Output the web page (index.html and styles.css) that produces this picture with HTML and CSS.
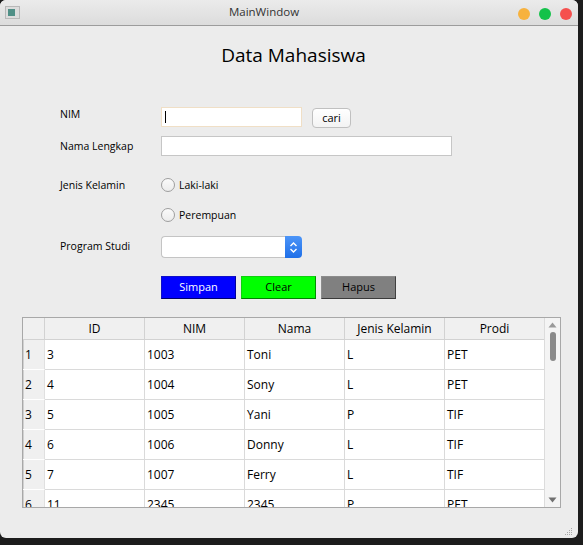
FILE: index.html
```html
<!DOCTYPE html>
<html>
<head>
<meta charset="utf-8">
<title>MainWindow</title>
<link rel="stylesheet" href="styles.css">
</head>
<body>
<div class="window">
  <div class="titlebar">
    <div class="app-icon"><span></span></div>
    <div class="title">MainWindow</div>
    <div class="lights">
      <span class="light orange"></span>
      <span class="light green"></span>
      <span class="light red"></span>
    </div>
  </div>
  <div class="content">
    <h1 class="heading">Data Mahasiswa</h1>
    <div class="form">
      <div class="row row-nim">
        <div class="label label-top">NIM</div>
        <div class="input input-nim focused"><span class="caret"></span></div>
        <div class="btn-cari">cari</div>
      </div>
      <div class="row row-nama">
        <div class="label">Nama Lengkap</div>
        <div class="input input-nama"></div>
      </div>
      <div class="row row-jk">
        <div class="label">Jenis Kelamin</div>
        <div class="radio"><span class="circle"></span>Laki-laki</div>
      </div>
      <div class="row row-p">
        <div class="label"></div>
        <div class="radio"><span class="circle"></span>Perempuan</div>
      </div>
      <div class="row row-prodi">
        <div class="label label-prodi">Program Studi</div>
        <div class="combo">
          <div class="combo-field"></div>
          <div class="combo-btn">
            <svg width="9" height="13" viewBox="0 0 9 13"><path d="M1.5 5 L4.5 2 L7.5 5 M1.5 8 L4.5 11 L7.5 8" fill="none" stroke="#fff" stroke-width="1.4"/></svg>
          </div>
        </div>
      </div>
      <div class="row row-btns">
        <div class="label"></div>
        <div class="actions">
          <div class="btn btn-simpan">Simpan</div>
          <div class="btn btn-clear">Clear</div>
          <div class="btn btn-hapus">Hapus</div>
        </div>
      </div>
    </div>
    <div class="table-frame">
      <div class="grid-view">
        <div class="grid">
          <div class="corner"></div>
          <div class="hcell">ID</div>
          <div class="hcell">NIM</div>
          <div class="hcell">Nama</div>
          <div class="hcell">Jenis Kelamin</div>
          <div class="hcell last">Prodi</div>

          <div class="rh">1</div><div class="cell">3</div><div class="cell">1003</div><div class="cell">Toni</div><div class="cell">L</div><div class="cell last">PET</div>
          <div class="rh">2</div><div class="cell">4</div><div class="cell">1004</div><div class="cell">Sony</div><div class="cell">L</div><div class="cell last">PET</div>
          <div class="rh">3</div><div class="cell">5</div><div class="cell">1005</div><div class="cell">Yani</div><div class="cell">P</div><div class="cell last">TIF</div>
          <div class="rh">4</div><div class="cell">6</div><div class="cell">1006</div><div class="cell">Donny</div><div class="cell">L</div><div class="cell last">TIF</div>
          <div class="rh">5</div><div class="cell">7</div><div class="cell">1007</div><div class="cell">Ferry</div><div class="cell">L</div><div class="cell last">TIF</div>
          <div class="rh">6</div><div class="cell">11</div><div class="cell">2345</div><div class="cell">2345</div><div class="cell">P</div><div class="cell last">PET</div>
        </div>
      </div>
      <div class="scrollbar">
        <svg class="arrow" width="9" height="6" viewBox="0 0 9 6"><path d="M0.5 5.5 L4.5 0.5 L8.5 5.5 Z" fill="#9a9a9a"/></svg>
        <div class="track"><div class="handle"></div></div>
        <svg class="arrow" width="9" height="6" viewBox="0 0 9 6"><path d="M0.5 0.5 L4.5 5.5 L8.5 0.5 Z" fill="#707070"/></svg>
      </div>
    </div>
    <div class="grip">
      <svg width="10" height="10" viewBox="0 0 10 10">
        <g fill="#a8a8a8"><rect x="7" y="1" width="1" height="1"/><rect x="5" y="3" width="1" height="1"/><rect x="7" y="3" width="1" height="1"/><rect x="3" y="5" width="1" height="1"/><rect x="5" y="5" width="1" height="1"/><rect x="7" y="5" width="1" height="1"/><rect x="1" y="7" width="1" height="1"/><rect x="3" y="7" width="1" height="1"/><rect x="5" y="7" width="1" height="1"/><rect x="7" y="7" width="1" height="1"/></g>
      </svg>
    </div>
  </div>
</div>
</body>
</html>
```

FILE: styles.css
```css
* { box-sizing: border-box; }
html, body { margin: 0; padding: 0; }
body {
  background: #1c1c1c;
  width: 583px;
  height: 545px;
  overflow: hidden;
  font-family: "Open Sans", "Noto Sans", sans-serif;
  font-size: 11px;
  color: #000;
}
.window {
  width: 578px;
  height: 538px;
  background: #ececec;
  border-radius: 6px;
  overflow: hidden;
  display: flex;
  flex-direction: column;
}
.titlebar {
  height: 26px;
  flex: none;
  background: linear-gradient(#ebebeb, #dcdcdc);
  border-bottom: 1px solid #9c9c9c;
  display: flex;
  align-items: center;
  position: relative;
}
.app-icon {
  margin-left: 5px;
  width: 15px;
  height: 13px;
  border: 1px solid #b8b8b8;
  background: #dcdcdc;
  padding: 2px;
}
.app-icon span {
  display: block;
  width: 7px;
  height: 7px;
  background: #4f8f86;
}
.title {
  flex: 1;
  text-align: center;
  font-family: "Open Sans", sans-serif;
  font-size: 11.5px;
  color: #333;
  margin-left: -10px;
  margin-top: -2px;
}
.lights {
  display: flex;
  gap: 9px;
  margin-right: 6px;
  margin-top: 2px;
}
.light {
  width: 12px;
  height: 12px;
  border-radius: 50%;
  display: block;
}
.orange { background: #f7b23e; }
.green { background: #14c24a; }
.red { background: #f5504e; }

.content {
  flex: 1;
  display: flex;
  flex-direction: column;
  position: relative;
}
.heading {
  margin: 16px 0 0 0;
  height: 26px;
  line-height: 26px;
  font-size: 19px;
  font-weight: normal;
  text-align: center;
  padding-left: 9px;
}
.form {
  margin-top: 39px;
  display: flex;
  flex-direction: column;
}
.row {
  display: flex;
  align-items: center;
  font-size: 10.5px;
}
.label {
  margin-left: 60px;
  width: 101px;
  flex: none;
  line-height: 14px;
}
.label-top { align-self: flex-start; margin-top: 0; }
.label-prodi { margin-top: -3px; }
.row-nim { height: 20px; }
.row-nama { height: 20px; margin-top: 9px; }
.row-jk { height: 17px; margin-top: 20px; }
.row-p { height: 17px; margin-top: 13px; }
.row-prodi { height: 22px; margin-top: 13px; }
.row-btns { height: 23px; margin-top: 18px; }

.input {
  height: 20px;
  background: #fff;
  border: 1px solid #c6c6c6;
  position: relative;
}
.input-nim { width: 141px; }
.input-nim.focused { border-color: #f0dfc6; }
.caret {
  position: absolute;
  left: 3px;
  top: 3px;
  width: 1px;
  height: 12px;
  background: #000;
}
.input-nama { width: 291px; }
.btn-cari {
  margin-left: 10px;
  width: 39px;
  height: 20px;
  margin-top: 1px;
  background: linear-gradient(#ffffff, #f3f3f3);
  border: 1px solid #c0c0c0;
  border-radius: 4px;
  text-align: center;
  line-height: 17px;
  font-size: 11px;
}
.radio {
  display: flex;
  align-items: center;
  line-height: 14px;
}
.circle {
  width: 14px;
  height: 14px;
  border-radius: 50%;
  border: 1px solid #9e9e9e;
  background: linear-gradient(#fafafa, #ececec);
  margin-right: 4px;
}
.combo {
  display: flex;
  width: 141px;
  height: 22px;
}
.combo-field {
  flex: 1;
  background: #fff;
  border: 1px solid #c4c4c4;
  border-right: none;
  border-radius: 4px 0 0 4px;
}
.combo-btn {
  width: 17px;
  background: linear-gradient(#4c95f8, #1f6fe8);
  border-radius: 0 4px 4px 0;
  display: flex;
  align-items: center;
  justify-content: center;
}
.actions {
  display: flex;
  gap: 5px;
}
.btn {
  width: 75px;
  height: 23px;
  line-height: 20px;
  text-align: center;
  border: 1px solid;
  font-size: 11px;
}
.btn-simpan {
  background: #0000ff;
  color: #fff;
  border-color: #1010c8 #00009a #00006a #1010c8;
}
.btn-clear {
  background: #00ff00;
  color: #000;
  border-color: #10d010 #009000 #008000 #10d010;
}
.btn-hapus {
  background: #808080;
  color: #000;
  border-color: #8c8c8c #404040 #3a3a3a #8c8c8c;
}

.table-frame {
  margin-top: 18px;
  margin-left: 22px;
  width: 539px;
  height: 191px;
  border: 1px solid #a8a8a8;
  background: #fff;
  display: flex;
}
.grid-view {
  flex: 1;
  overflow: hidden;
}
.grid {
  display: grid;
  grid-template-columns: 22px 100px 100px 100px 100px 99px;
  grid-template-rows: 22px repeat(6, 30px);
  font-size: 12px;
}
.corner {
  background: #f0f0f0;
  border-right: 1px solid #d2d2d2;
  border-bottom: 1px solid #d2d2d2;
}
.hcell {
  background: #f0f0f0;
  border-right: 1px solid #d2d2d2;
  border-bottom: 1px solid #d2d2d2;
  text-align: center;
  line-height: 21px;
}
.hcell.last { border-right: none; }
.rh {
  background: #f0f0f0;
  border-bottom: 1px solid #fff;
  border-right: 1px solid #e0e0e0;
  box-shadow: inset 1px 0 0 #d0d0d0;
  padding-left: 2px;
  line-height: 29px;
}
.cell {
  border-right: 1px solid #dadada;
  border-bottom: 1px solid #dadada;
  padding-left: 2px;
  line-height: 29px;
}
.cell.last { border-right: none; }
.scrollbar {
  width: 16px;
  background: #f4f4f4;
  border-left: 1px solid #dcdcdc;
  display: flex;
  flex-direction: column;
  align-items: center;
  padding: 4px 0 4px;
}
.track {
  flex: 1;
  width: 100%;
  display: flex;
  justify-content: center;
  padding-top: 4px;
}
.handle {
  width: 6px;
  height: 29px;
  background: #8a8a8a;
  border-radius: 3px;
}
.grip {
  position: absolute;
  right: 4px;
  bottom: 3px;
  width: 10px;
  height: 10px;
}
```
